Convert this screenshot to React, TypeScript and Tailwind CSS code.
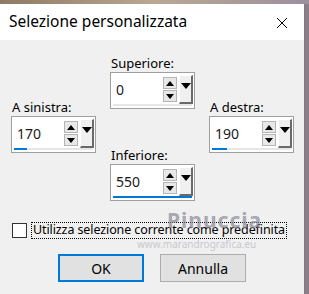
import React from 'react';

const font = { fontFamily: '"Noto Sans", "Open Sans", sans-serif' };

function Spin({ value, fill }: { value: string; fill: number }) {
  return (
    <div className="w-[85px] h-[37px] border border-[#a0a0a0] bg-white flex flex-col pt-[2px]">
      <div className="flex items-center h-[29px]">
        <div className="flex-1 pl-[5px] text-[14px] text-[#1a1a1a] leading-none">{value}</div>
        <div className="flex flex-col gap-[1px] w-[14px]">
          <div className="h-[12px] border border-[#b5b5b5] bg-[#e8e8e8] flex items-center justify-center">
            <div className="w-0 h-0 border-l-[4px] border-r-[4px] border-b-[5px] border-l-transparent border-r-transparent border-b-black" />
          </div>
          <div className="h-[12px] border border-[#b5b5b5] bg-[#e8e8e8] flex items-center justify-center">
            <div className="w-0 h-0 border-l-[4px] border-r-[4px] border-t-[5px] border-l-transparent border-r-transparent border-t-black" />
          </div>
        </div>
        <div className="ml-[2px] mr-[1px] w-[14px] h-[29px] bg-[#f0f0f0] border-t border-l border-t-white border-l-white border-r-2 border-b-2 border-r-[#6a6a6a] border-b-[#6a6a6a] flex items-center justify-center pb-[6px]">
          <div className="w-0 h-0 border-l-[5px] border-r-[5px] border-t-[6px] border-l-transparent border-r-transparent border-t-black" />
        </div>
      </div>
      <div className="mx-[2px] mt-auto mb-[2px] h-[3px] bg-[#e6e6e6]">
        <div className="h-full bg-[#0078d7]" style={{ width: `${fill}%` }} />
      </div>
    </div>
  );
}

function Label({ children }: { children: React.ReactNode }) {
  return <div className="h-[17px] text-[13px] leading-[17px] text-black pl-[1px]">{children}</div>;
}

export default function App() {
  return (
    <div className="w-[309px] h-[294px] overflow-hidden bg-[#8c7f8a] flex flex-col" style={font}>
      <div className="h-[4px] bg-gradient-to-r from-[#8d7a63] via-[#b9a892] to-[#9b8fa0]" />
      <div className="flex flex-1">
        <div className="w-[305px] flex flex-col bg-[#f0f0f0] border-r border-[#7c7c7c] relative">
          <div className="h-[36px] bg-white flex items-center justify-between pl-[9px] pr-[16px]">
            <span className="text-[15.5px] text-black">Selezione personalizzata</span>
            <svg width="12" height="12" viewBox="0 0 12 12" className="mt-[1px]">
              <path d="M1 1L11 11M11 1L1 11" stroke="#000" strokeWidth="1" />
            </svg>
          </div>
          <div className="flex pl-[11px] gap-[14px]">
            <div className="flex flex-col pt-[59px]">
              <Label>A sinistra:</Label>
              <Spin value="170" fill={17} />
            </div>
            <div className="flex flex-col pt-[15px]">
              <Label>Superiore:</Label>
              <Spin value="0" fill={0} />
              <div className="mt-[38px]" />
              <Label>Inferiore:</Label>
              <Spin value="550" fill={100} />
            </div>
            <div className="flex flex-col pt-[59px]">
              <Label>A destra:</Label>
              <Spin value="190" fill={19} />
            </div>
          </div>
          <div className="flex items-center mt-[21px] pl-[12px]">
            <div className="w-[15px] h-[15px] border border-[#333] bg-white" />
            <div className="ml-[4px] border border-dotted border-black px-[1px] h-[17px] flex items-center text-[12.5px] tracking-[-0.1px] text-black leading-none whitespace-nowrap">
              Utilizza selezione corrente come predefinita
            </div>
          </div>
          <div className="flex justify-center gap-[16px] mt-[15px]">
            <button className="w-[86px] h-[28px] border-2 border-[#0078d7] bg-[#e1e1e1] text-[14px] text-black">OK</button>
            <button className="w-[86px] h-[28px] border border-[#adadad] bg-[#e1e1e1] text-[14px] text-black">Annulla</button>
          </div>
          <div className="absolute left-[167px] top-[201px] text-[21px] text-[#8a8a96] opacity-70 font-bold tracking-[1px] pointer-events-none">Pinuccia</div>
          <div className="absolute left-[137px] top-[233px] text-[10px] text-[#a0a0aa] opacity-50 pointer-events-none">www.marandrografica.eu</div>
        </div>
        <div className="flex-1" />
      </div>
    </div>
  );
}
